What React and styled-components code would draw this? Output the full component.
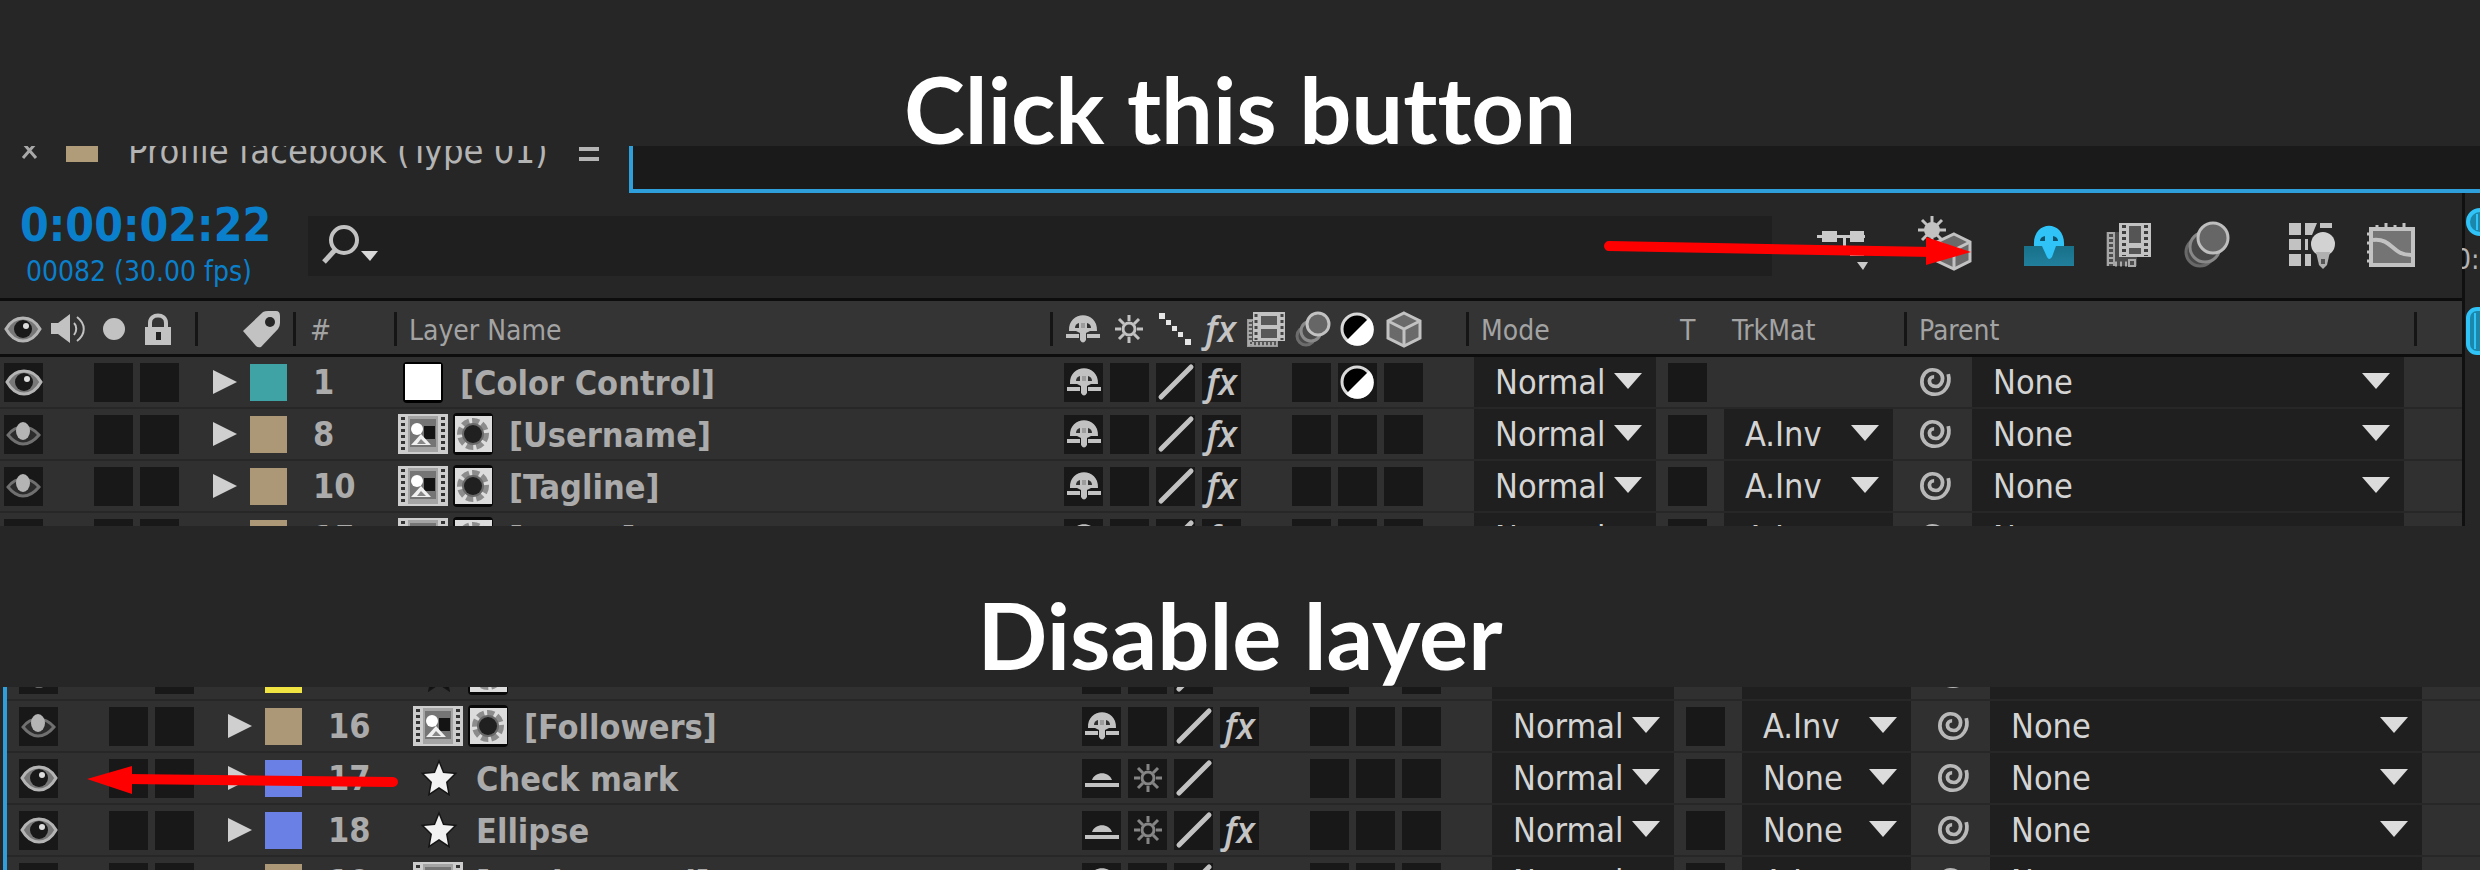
import React from "react"
import styled, { createGlobalStyle } from "styled-components"

const GlobalStyle = createGlobalStyle`
  * {
    box-sizing: border-box;
  }

  body {
    margin: 0;
    background-color: #262626;
    color: #b4b4b4;
    font-family: "DejaVu Sans Condensed", "DejaVu Sans", sans-serif;
  }

  button, input, select {
    font: inherit;
    color: inherit;
    border: none;
    padding: 0;
    background: none;
  }

  svg {
    display: block;
    overflow: visible;
  }
`

const Page = styled.main`
  min-height: 100vh;
  display: flex;
  flex-direction: column;
  overflow: hidden;
`

const Title = styled.h1`
  position: relative;
  z-index: 1;
  margin: 0;
  padding: 72px 0 ${({ $below }) => $below ?? 0}px;
  color: white;
  font-family: Lato, sans-serif;
  font-size: 92px;
  font-weight: 700;
  font-variant-ligatures: none;
  line-height: 74px;
  text-align: center;
  white-space: nowrap;
`

const TimelinePanel = styled.section`
  display: flex;
  max-height: 380px;
  overflow: hidden;
`

const TimelineMain = styled.div`
  flex: 1;
  min-width: 0;
`

const LayerPanel = styled.section`
  position: relative;
  flex: 1 1 0;
  min-height: 183px;
  margin-left: 3px;
  border-left: 4px solid #2f9fdc;
  overflow: hidden;
`

/* tab strip */

const TabStrip = styled.div`
  display: flex;
  height: 47px;
  overflow: hidden;
`

const Tab = styled.div`
  display: flex;
  align-items: center;
  height: 60px;
  width: 629px;
  margin-top: -26px;
  padding-left: 22px;
  font-size: 36px;
  white-space: nowrap;
`

const TabClose = styled.button`
  width: 44px;
`

const TabSwatch = styled.span`
  width: 32px;
  height: 24px;
  margin-right: 30px;
  background-color: #b09c78;
`

const TabName = styled.button`
  margin-right: auto;
`

const TabMenu = styled.button`
  width: 20px;
  height: 14px;
  margin: 8px 30px 0 0;
  border-top: 4px solid #b4b4b4;
  border-bottom: 4px solid #b4b4b4;
`

const TabDock = styled.div`
  flex: 1;
  border-left: 4px solid #2f9fdc;
  border-bottom: 4px solid #2f9fdc;
  background-color: #1a1a1a;
`

/* toolbar */

const Toolbar = styled.div`
  display: flex;
  align-items: center;
  height: 105px;
  padding-right: 43px;
`

const TimeDisplay = styled.div`
  width: 308px;
  padding-left: 20px;
  color: #0a80cc;
`

const Timecode = styled.div`
  font-size: 46px;
  font-weight: 700;
  line-height: 52px;
`

const FrameInfo = styled.div`
  padding-left: 6px;
  font-size: 28px;
  line-height: 42px;
`

const SearchBox = styled.label`
  display: flex;
  align-items: center;
  flex: 1;
  height: 60px;
  margin-right: 45px;
  padding-left: 14px;
  background-color: #1f1f1f;
`

const SearchInput = styled.input`
  flex: 1;
  height: 100%;
  padding-left: 12px;
  font-size: 28px;
  outline: none;
`

const ToolGroups = styled.div`
  display: flex;
  gap: 54px;
`

const ToolGroup = styled.div`
  display: flex;
  gap: 30px;
`

const ToolButton = styled.button`
  position: relative;
  width: 50px;
  height: 58px;
`

const ButtonPointer = styled.svg`
  position: absolute;
  top: 18px;
  right: 0;
  z-index: 1;
`

const LayerPointer = styled.svg`
  position: absolute;
  top: 79px;
  left: 80px;
  z-index: 1;
`

/* layer table */

const Table = styled.table`
  display: block;
  margin-top: ${({ $cut }) => ($cut ? -38 : 0)}px;

  thead, tbody {
    display: block;
  }
`

const columns = `
  display: grid;
  grid-template-columns: 47px 43px 46px 55px 98px 101px 1fr 416px 190px 68px 180px 500px 58px;
`

const HeadRow = styled.tr`
  ${columns}
  align-items: center;
  height: 59px;
  padding: 3px 0 0 4px;
  border-top: 3px solid #0d0d0d;
  border-bottom: 3px solid #0d0d0d;
  background-color: #343434;
`

const HeadCell = styled.th`
  display: flex;
  align-items: center;
  height: 34px;
  padding: 0 0 0 ${({ $pad }) => $pad ?? 0}px;
  border-left: ${({ $divided }) => ($divided ? "3px solid #151515" : "none")};
  color: #a3a3a3;
  font-size: 28px;
  font-weight: 400;
  line-height: 34px;
  white-space: nowrap;
`

const HeadText = styled.span`
  padding-top: 4px;
`

const TailHead = styled(HeadCell)`
  margin-left: 10px;
`

const Row = styled.tr`
  ${columns}
  height: 52px;
  padding-left: ${({ $inset }) => ($inset ? 12 : 4)}px;
  border-bottom: 2px solid #272727;
  background-color: #303030;
`

const Cell = styled.td`
  display: flex;
  align-items: center;
  padding: 0 0 0 ${({ $pad }) => $pad ?? 0}px;
`

const NumberCell = styled(Cell)`
  color: #ababab;
  font-size: 34px;
  font-weight: 700;
  line-height: 40px;
`

const NameCell = styled(NumberCell)`
  gap: 4px;
  overflow: hidden;
  white-space: nowrap;
`

const LayerName = styled.span`
  padding: 2px 0 0 ${({ $pad }) => $pad}px;
`

const Toggle = styled.button`
  display: flex;
  align-items: center;
  justify-content: center;
  width: 39px;
  height: 39px;
  background-color: #181818;
  visibility: ${({ $hidden }) => ($hidden ? "hidden" : "visible")};
`

const Expand = styled.button`
  width: 37px;
`

const Swatch = styled.button`
  width: 37px;
  height: 37px;
  background-color: ${({ $color }) => $color};
`

const SwitchGrid = styled.div`
  display: grid;
  grid-template-columns: repeat(8, 1fr);
  justify-items: center;
  align-items: center;
  column-gap: 7px;
  width: 359px;
`

const Fx = styled.span`
  color: #c4c4c4;
  font-family: "Open Sans", sans-serif;
  font-size: 36px;
  font-style: italic;
  font-weight: 600;
  line-height: 38px;
`

const SelectBox = styled.span`
  position: relative;
  display: block;
  width: ${({ $width }) => $width}px;
  height: 50px;
  background-color: #1f1f1f;
`

const Select = styled.select`
  appearance: none;
  width: 100%;
  height: 100%;
  padding: 0 44px 0 21px;
  color: #d4d4d4;
  font-size: 34px;
  outline: none;
`

const SelectArrow = styled.svg`
  position: absolute;
  top: 16px;
  right: 14px;
  pointer-events: none;
`

const PickWhip = styled.button`
  width: 52px;
`

/* time ruler at the right */

const Ruler = styled.aside`
  width: 18px;
  overflow: hidden;
`

const RulerCap = styled.div`
  height: 47px;
  border-bottom: 4px solid #2f9fdc;
  background-color: #1a1a1a;
`

const RulerBody = styled.div`
  height: 100%;
  padding: 16px 0 0 2px;
  border-left: 3px solid #101010;
  background-color: #262626;
  font-size: 28px;
`

const RulerLabel = styled.div`
  margin: 11px 0 34px -12px;
  line-height: 28px;
  white-space: nowrap;
`

const light = "#c2c2c2"

const EyeIcon = ({ dim }) => (
  <svg width="38" height="28" viewBox="0 0 38 28">
    {dim ? (
      <>
        <path d="M3 15C8 8 14 7 18 7s11 2 16 8c-5 6-11 9-16 9S8 21 3 15Z" fill="#2c2c2c" stroke="#707070" strokeWidth="3" />
        <ellipse cx="18" cy="11" rx="7" ry="9" fill="#b4b4b4" />
      </>
    ) : (
      <>
        <path d="M2 14C7 5 14 3 19 3s12 2 17 11c-5 9-12 12-17 12S7 23 2 14Z" fill="#777" stroke="#b4b4b4" strokeWidth="3" />
        <circle cx="19" cy="14" r="9" fill="#191919" />
        <circle cx="22" cy="11" r="3" fill="#ddd" />
      </>
    )}
  </svg>
)

const SpeakerIcon = () => (
  <svg width="36" height="32" viewBox="0 0 36 32" fill="none" stroke={light} strokeWidth="2">
    <path d="M0 10h7L19 1v29L7 21H0Z" fill={light} stroke="none" />
    <path d="M23 10c3 3 3 8 0 12M26 4c9 7 9 17 0 24" />
  </svg>
)

const LockIcon = () => (
  <svg width="26" height="32" viewBox="0 0 26 32">
    <path d="M5 15V10c0-10 16-10 16 0v5" fill="none" stroke={light} strokeWidth="4" />
    <path d="M0 14h26v18H0Z" fill={light} />
    <path d="M11 19h5v8h-5Z" fill="#222" />
  </svg>
)

const TagIcon = () => (
  <svg width="38" height="38" viewBox="0 0 38 38">
    <path d="M0 21 20 2Q22 1 25 1h8Q37 1 37 6v7q0 3-2 6L18 37Q15 38 13 36Z" fill={light} />
    <circle cx="27" cy="12" r="5" fill="#262626" />
  </svg>
)

const ShyIcon = () => (
  <svg width="34" height="28" viewBox="0 0 34 28">
    <path d="M3 16C2-5 32-5 31 16H24L20 18v7q-3 5-6 0v-7l-4-2Z" fill={light} />
    <path d="M0 19h13v4H0ZM21 19h13v4H21Z" fill={light} />
    <path d="M9 13q0-4 4-5v5ZM25 13q0-4-4-5v5Z" fill="#303030" />
    <path d="M16 8v5M18 8v5" stroke="#777" strokeWidth="1" />
  </svg>
)

const ShyHiddenIcon = () => (
  <svg width="34" height="28" viewBox="0 0 34 28" fill={light}>
    <path d="M7 16c3-9 17-9 20 0ZM0 19h34v4H0Z" />
  </svg>
)

const SunIcon = ({ dim }) => (
  <svg width="28" height="28" viewBox="0 0 28 28" fill="none" stroke={dim ? "#858585" : light} strokeWidth="3">
    <circle cx="14" cy="14" r="6" />
    <path d="M14 0v6M14 22v6M0 14h6M22 14h6M4 4l5 5M19 19l5 5M24 4l-5 5M9 19l-5 5" />
  </svg>
)

const DotsIcon = () => (
  <svg width="32" height="32" viewBox="0 0 32 32" fill="#e6e6e6">
    <path d="M0 0h6v6H0ZM7 7h5v5H7ZM13 13h5v5h-5ZM19 19h5v5h-5ZM26 26h6v6h-6Z" />
  </svg>
)

const SlashIcon = () => (
  <svg width="34" height="34" viewBox="0 0 34 34">
    <path d="M2 32 32 2" stroke={light} strokeWidth="5" strokeLinecap="round" />
  </svg>
)

const FramesIcon = () => (
  <svg width="38" height="35" viewBox="0 0 38 35">
    <path d="M1 8h29v26H1Z" fill="#555" stroke="#999" strokeWidth="2" />
    <path d="M3 8v25M1 32h29" stroke="#aaa" strokeWidth="4" strokeDasharray="2 2" />
    <path d="M6 0h32v29H6Z" fill={light} />
    <path d="M14 4h16v9H14ZM14 17h16v9H14Z" fill="#585858" />
    <path d="M9 2v26M35 2v26" stroke="#444" strokeWidth="3" strokeDasharray="3 3" />
  </svg>
)

const MotionIcon = () => (
  <svg width="35" height="35" viewBox="0 0 35 35" fill="#4a4a4a" strokeWidth="3">
    <circle cx="11" cy="24" r="9" stroke="#6c6c6c" />
    <circle cx="16" cy="19" r="10" stroke="#8a8a8a" />
    <circle cx="23" cy="12" r="11" fill="#666" stroke={light} />
  </svg>
)

const AdjustIcon = () => (
  <svg width="35" height="35" viewBox="0 0 35 35">
    <circle cx="17" cy="17" r="15" fill="black" stroke="#d8d8d8" strokeWidth="3" />
    <path d="M6 29A16 16 0 0 0 29 6Z" fill="white" />
  </svg>
)

const CubeIcon = () => (
  <svg width="36" height="36" viewBox="0 0 36 36" fill="#6a6a6a" stroke={light} strokeWidth="3">
    <path d="M18 2 34 10V27L18 35 2 27V10Z" />
    <path d="M2 10 18 18 34 10M18 18V35" fill="none" />
  </svg>
)

const SwirlIcon = () => (
  <svg width="32" height="30" viewBox="0 0 34 34" preserveAspectRatio="none" fill="none" stroke="#b8b8b8" strokeWidth="4">
    <path d="M30 8C33 20 26 31 16 31C7 31 2 24 2 17C2 9 7 3 13 3C20 3 24 8 24 13C24 18 21 22 17 22C12 22 10 19 10 16C10 13 12 11 15 11" />
  </svg>
)

const SolidIcon = () => (
  <svg width="42" height="42" viewBox="0 0 42 42">
    <rect x="1" y="1" width="40" height="41" rx="4" fill="black" />
    <path d="M3 3h36v36H3Z" fill="white" />
  </svg>
)

const CompIcon = () => (
  <svg width="50" height="40" viewBox="0 0 50 40">
    <path d="M0 0h50v40H0Z" fill="#cdcdcd" />
    <path d="M5 3v36M45 3v36" stroke="#333" strokeWidth="4" strokeDasharray="3 3" />
    <path d="M10 2h30v36H10Z" fill="#a4a4a4" />
    <path d="M12 5h26v28H12Z" fill="#757575" />
    <path d="M26 12h11v13H26Z" fill="#141414" />
    <circle cx="19" cy="15" r="6" fill="white" />
    <path d="M13 31 23 20 33 31Z" fill="#f0f0f0" />
    <path d="m19 30 4-5 5 5Z" fill="#888" />
  </svg>
)

const MaskIcon = () => (
  <svg width="42" height="42" viewBox="0 0 42 42">
    <rect x="1" width="40" height="42" rx="4" fill="#080808" />
    <path d="M3 3h37v36H3Z" fill="#dcdcdc" />
    <circle cx="21" cy="21" r="13" fill="none" stroke="#8c8c8c" strokeWidth="6" strokeDasharray="7 3" />
    <circle cx="21" cy="21" r="11" fill="#6a6a6a" />
    <circle cx="21" cy="21" r="9" fill="#202020" />
  </svg>
)

const StarIcon = ({ dark }) => (
  <svg width="50" height="38" viewBox="-10 0 50 38">
    <path d="m16 4 4 10 11 1-8 8 2 11-9-6-9 6 2-11-8-8 11-1Z" fill={dark ? "#111" : "#f2f2f2"} stroke="#151515" strokeWidth="3" paintOrder="stroke" />
  </svg>
)

const FlowToolIcon = () => (
  <svg width="50" height="56" viewBox="0 0 50 56" fill="#cacaca">
    <path d="M0 17h48v3H0ZM5 13h15v11H5ZM33 13h14v11H33ZM26 18h3v16h-3ZM33 28h14v10H33ZM40 44h11l-5 8Z" />
  </svg>
)

const DraftToolIcon = () => (
  <svg width="50" height="56" viewBox="0 0 50 56">
    <path d="M33 16 49 24V43L33 51 16 43V24Z" fill="#6a6a6a" stroke={light} strokeWidth="3" />
    <path d="m17 24 16 8 16-8M33 32v18" fill="none" stroke={light} strokeWidth="3" />
    <circle cx="11" cy="12" r="8" fill={light} />
    <path d="M11-2v28M-3 12h28M1 2l20 20M21 2 1 22" stroke={light} strokeWidth="3" />
  </svg>
)

const ShyToolIcon = () => (
  <svg width="50" height="56" viewBox="0 0 50 56">
    <defs>
      <linearGradient id="wall" x1="0" y1="0" x2="0" y2="1">
        <stop offset="0" stopColor="#187089" />
        <stop offset="1" stopColor="#217f9c" />
      </linearGradient>
    </defs>
    <path d="M-1 28h50v20H-1Z" fill="url(#wall)" />
    <path d="M9 28C7 1 41 1 39 28H31l-4 11q-3 4-5 0L17 28Z" fill="#2fc3f7" />
    <path d="M15 23q0-4 5-5v5ZM33 23q0-4-5-5v5Z" fill="#12506a" />
  </svg>
)

const FramesToolIcon = () => (
  <svg width="50" height="56" viewBox="0 0 50 56">
    <path d="M1 14h31v34H1Z" fill="#4c4c4c" />
    <path d="M3 14v34M9 14v34" stroke="#a5a5a5" strokeWidth="2" />
    <path d="M6 14v34M10 46h14" stroke="#aaa" strokeWidth="5" strokeDasharray="2 3" />
    <path d="M24 42h6v6h-6Z" fill="none" stroke="#aaa" strokeWidth="2" />
    <path d="M14 5h32v34H14Z" fill={light} />
    <path d="M24 8h12v17H24ZM24 30h12v6H24Z" fill="#555" />
    <path d="M19 7v31M41 7v31" stroke="#3c3c3c" strokeWidth="4" strokeDasharray="3 3" />
  </svg>
)

const MotionToolIcon = () => (
  <svg width="50" height="56" viewBox="0 0 50 56" strokeWidth="3" fill="#484848">
    <circle cx="15" cy="34" r="14" stroke="#686868" />
    <circle cx="20" cy="29" r="15" stroke="#888" />
    <circle cx="28" cy="20" r="15" fill="#666" stroke="#bebebe" />
  </svg>
)

const BrainstormToolIcon = () => (
  <svg width="50" height="56" viewBox="0 0 50 56">
    <path d="M0 5h12v12H0ZM16 5h12l-5 12h-7ZM31 5h12v5H31ZM0 21h12v11H0ZM16 21h3v11h-3ZM0 36h12v12H0ZM16 36h6v12h-6Z" fill={light} />
    <circle cx="34" cy="26" r="12" fill="#d2d2d2" />
    <path d="M27 34h14l-3 13-4 4-4-4Z" fill="#b0b0b0" />
    <path d="M32 41h4v5h-4Z" fill="#555" />
  </svg>
)

const GraphToolIcon = () => (
  <svg width="50" height="56" viewBox="0 0 50 56">
    <path d="M2 11h42v36H2Z" fill="#747474" stroke={light} strokeWidth="4" />
    <path d="M4 22c20-2 18 15 38 15" fill="none" stroke={light} strokeWidth="4" />
    <path d="M8 7v4M17 5v6M26 7v4M35 5v6M-2 16h4M-2 25h4M-2 34h4M-2 43h4" stroke={light} strokeWidth="3" />
  </svg>
)

const SearchIcon = () => (
  <svg width="58" height="42" viewBox="0 0 58 42">
    <ellipse cx="22" cy="15" rx="13" ry="13" fill="none" stroke={light} strokeWidth="4" />
    <path d="M13 25 2 37" stroke={light} strokeWidth="5" />
    <path d="M39 26h17l-8 10Z" fill="#d8d8d8" />
  </svg>
)

const KnobIcon = ({ round }) => (
  <svg width="20" height={round ? 26 : 46} viewBox={round ? "0 0 20 26" : "0 0 20 46"}>
    <rect x="1" y="1" width="30" height={round ? 24 : 44} rx={round ? 12 : 9} fill="#1b87aa" stroke="#2fc3f7" strokeWidth="4" />
    <path d={round ? "M10 5v16M15 4v18" : "M8 5v36M14 5v36"} stroke="#2fc3f7" strokeWidth="2" />
  </svg>
)

const tools = [
  [["Mini-flowchart", FlowToolIcon]],
  [["Draft 3D", DraftToolIcon]],
  [["Hide shy layers", ShyToolIcon], ["Frame blending", FramesToolIcon], ["Motion blur", MotionToolIcon]],
  [["Brainstorm", BrainstormToolIcon], ["Graph editor", GraphToolIcon]],
]

const sand = "#ac9876"
const blue = "#6b80e4"

const timelineLayers = [
  { id: 1, name: "[Color Control]", color: "#3fa3a5", kind: "solid", shy: "up", fx: true, adjust: true, matte: null },
  { id: 8, name: "[Username]", color: sand, kind: "comp", dim: true, shy: "up", fx: true, matte: "A.Inv" },
  { id: 10, name: "[Tagline]", color: sand, kind: "comp", dim: true, shy: "up", fx: true, matte: "A.Inv" },
  { id: 15, name: "[Name]", color: sand, kind: "comp", dim: true, shy: "up", fx: true, matte: "A.Inv" },
]

const layerLayers = [
  { id: 15, name: "", color: "#f0e443", kind: "matte", partial: true, matte: "None" },
  { id: 16, name: "[Followers]", color: sand, kind: "comp", dim: true, shy: "up", fx: true, matte: "A.Inv" },
  { id: 17, name: "Check mark", color: blue, kind: "shape", shy: "down", sun: true, matte: "None" },
  { id: 18, name: "Ellipse", color: blue, kind: "shape", shy: "down", sun: true, fx: true, matte: "None" },
  { id: 19, name: "[Background]", color: sand, kind: "precomp", dim: true, shy: "up", matte: "A.Inv" },
]

const namePads = { solid: 12, comp: 11, shape: 9, matte: 11, precomp: 9 }

const LayerIcon = ({ kind }) => {
  if (kind === "solid") return <SolidIcon />
  if (kind === "shape") return <StarIcon />
  if (kind === "precomp") return <CompIcon />
  return (
    <>
      {kind === "matte" ? <StarIcon dark /> : <CompIcon />}
      <MaskIcon />
    </>
  )
}

const Dropdown = ({ label, value, width }) => (
  <SelectBox $width={width}>
    <Select aria-label={label} defaultValue={value}>
      <option>{value}</option>
    </Select>
    <SelectArrow width="28" height="16" viewBox="0 0 28 16">
      <path d="M0 0h28L14 16Z" fill="#dcdcdc" />
    </SelectArrow>
  </SelectBox>
)

const LayerRow = ({ layer, inset }) => (
  <Row $inset={inset}>
    <Cell>
      <Toggle aria-label="Video"><EyeIcon dim={layer.dim} /></Toggle>
    </Cell>
    <Cell />
    <Cell><Toggle aria-label="Solo" $hidden={layer.partial} /></Cell>
    <Cell><Toggle aria-label="Lock" /></Cell>
    <Cell $pad={18}>
      <Expand aria-label="Expand">
        <svg width="24" height="24" viewBox="0 0 24 24">
          <path d="M0 0 24 12 0 24Z" fill="#cfcfcf" />
        </svg>
      </Expand>
      <Swatch aria-label="Label colour" $color={layer.color} />
    </Cell>
    <NumberCell $pad={20}>{layer.id}</NumberCell>
    <NameCell $pad={layer.kind === "solid" ? 8 : 4}>
      <LayerIcon kind={layer.kind} />
      <LayerName $pad={namePads[layer.kind]}>{layer.name}</LayerName>
    </NameCell>
    <Cell $pad={14}>
      <SwitchGrid>
        <Toggle aria-label="Shy">
          {layer.shy === "up" && <ShyIcon />}
          {layer.shy === "down" && <ShyHiddenIcon />}
        </Toggle>
        <Toggle aria-label="Collapse">{layer.sun && <SunIcon dim />}</Toggle>
        <Toggle aria-label="Quality"><SlashIcon /></Toggle>
        <Toggle aria-label="Effects" $hidden={!layer.fx}><Fx>fx</Fx></Toggle>
        <span />
        <Toggle aria-label="Motion blur" />
        <Toggle aria-label="Adjustment" $hidden={layer.partial}>{layer.adjust && <AdjustIcon />}</Toggle>
        <Toggle aria-label="3D layer" />
      </SwitchGrid>
    </Cell>
    <Cell $pad={8}><Dropdown label="Mode" value="Normal" width={182} /></Cell>
    <Cell $pad={12}><Toggle aria-label="Preserve transparency" $hidden={layer.partial} /></Cell>
    <Cell>{layer.matte && <Dropdown label="Track matte" value={layer.matte} width={169} />}</Cell>
    <Cell $pad={16}>
      <PickWhip aria-label="Pick whip"><SwirlIcon /></PickWhip>
      <Dropdown label="Parent" value="None" width={432} />
    </Cell>
    <Cell />
  </Row>
)

const TableHead = () => (
  <thead>
    <HeadRow>
      <HeadCell aria-label="Video"><EyeIcon /></HeadCell>
      <HeadCell aria-label="Audio"><SpeakerIcon /></HeadCell>
      <HeadCell aria-label="Solo" $pad={9}>
        <svg width="22" height="22" viewBox="0 0 22 22"><circle cx="11" cy="11" r="11" fill={light} /></svg>
      </HeadCell>
      <HeadCell aria-label="Lock" $pad={5}><LockIcon /></HeadCell>
      <HeadCell aria-label="Label" $divided $pad={45}><TagIcon /></HeadCell>
      <HeadCell $divided $pad={14}><HeadText>#</HeadText></HeadCell>
      <HeadCell $divided $pad={12}><HeadText>Layer Name</HeadText></HeadCell>
      <HeadCell aria-label="Switches" $divided $pad={11}>
        <SwitchGrid>
          <ShyIcon />
          <SunIcon />
          <DotsIcon />
          <Fx>fx</Fx>
          <FramesIcon />
          <MotionIcon />
          <AdjustIcon />
          <CubeIcon />
        </SwitchGrid>
      </HeadCell>
      <HeadCell $divided $pad={12}><HeadText>Mode</HeadText></HeadCell>
      <HeadCell $pad={24}><HeadText>T</HeadText></HeadCell>
      <HeadCell $pad={8}><HeadText>TrkMat</HeadText></HeadCell>
      <HeadCell $divided $pad={12}><HeadText>Parent</HeadText></HeadCell>
      <TailHead as="td" $divided />
    </HeadRow>
  </thead>
)

const Timeline = () => (
  <TimelinePanel>
    <TimelineMain>
      <TabStrip>
        <Tab>
          <TabClose aria-label="Close tab">
            <svg width="15" height="15" viewBox="0 0 15 15">
              <path d="m1 0 13 15M14 0 1 15" stroke="#a8a8a8" strokeWidth="3" />
            </svg>
          </TabClose>
          <TabSwatch />
          <TabName>Profile facebook (Type 01)</TabName>
          <TabMenu aria-label="Panel menu" />
        </Tab>
        <TabDock />
      </TabStrip>
      <Toolbar>
        <TimeDisplay>
          <Timecode>0:00:02:22</Timecode>
          <FrameInfo>00082 (30.00 fps)</FrameInfo>
        </TimeDisplay>
        <SearchBox>
          <SearchIcon />
          <SearchInput type="text" aria-label="Search layers" />
        </SearchBox>
        <ToolGroups>
          {tools.map((group, i) => (
            <ToolGroup key={i}>
              {group.map(([label, Icon]) => (
                <ToolButton key={label} aria-label={label}>
                  <Icon />
                  {label === "Draft 3D" && (
                    <ButtonPointer width="368" height="30" viewBox="0 0 368 30">
                      <path d="M6 11 330 17" stroke="red" strokeWidth="10" strokeLinecap="round" />
                      <path d="M323 2 368 17 323 30Z" fill="red" />
                    </ButtonPointer>
                  )}
                </ToolButton>
              ))}
            </ToolGroup>
          ))}
        </ToolGroups>
      </Toolbar>
      <Table>
        <TableHead />
        <tbody>
          {timelineLayers.map(layer => <LayerRow key={layer.id} layer={layer} />)}
        </tbody>
      </Table>
    </TimelineMain>
    <Ruler>
      <RulerCap />
      <RulerBody>
        <KnobIcon round />
        <RulerLabel>0:00</RulerLabel>
        <KnobIcon />
      </RulerBody>
    </Ruler>
  </TimelinePanel>
)

const App = () => (
  <>
    <GlobalStyle />
    <Page>
      <Title>Click this button</Title>
      <Timeline />
      <Title as="h2" $below={15}>Disable layer</Title>
      <LayerPanel>
        <Table $cut>
          <tbody>
            {layerLayers.map(layer => <LayerRow key={layer.id} layer={layer} inset />)}
          </tbody>
        </Table>
        <LayerPointer width="312" height="28" viewBox="0 0 312 28">
          <path d="M40 13 306 16" stroke="red" strokeWidth="10" strokeLinecap="round" />
          <path d="M0 13 45 0V28Z" fill="red" />
        </LayerPointer>
      </LayerPanel>
    </Page>
  </>
)

export default App
